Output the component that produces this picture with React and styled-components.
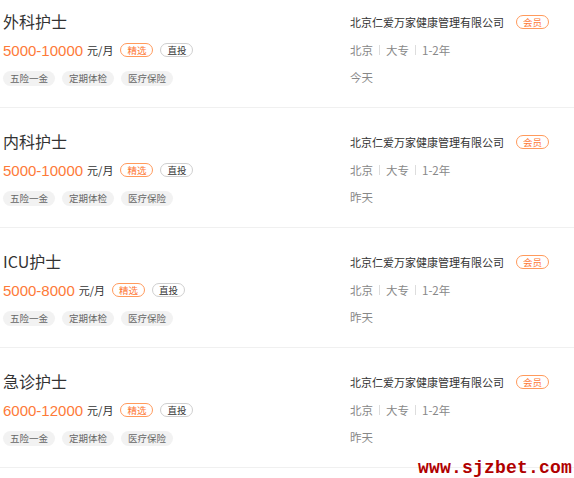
import React from "react";
import styled, { createGlobalStyle } from "styled-components";

const GlobalStyle = createGlobalStyle`
  body {
    margin: 0;
    background: #fff;
    font-family: "Noto Sans CJK SC", "Liberation Sans", sans-serif;
  }
`;

const Page = styled.div`
  position: relative;
  width: 574px;
  height: 478px;
  overflow: hidden;
`;

const Card = styled.div`
  display: flex;
  height: 107px;
  padding: 0 0 0 3px;
  border-bottom: 1px solid #f0f0f0;
  margin-bottom: 12px;
`;

const Left = styled.div`
  flex: 0 0 347px;
  padding-top: 10px;
`;

const Title = styled.div`
  font-size: 16px;
  line-height: 22px;
  height: 22px;
  color: #333;
`;

const SalaryRow = styled.div`
  display: flex;
  align-items: center;
  height: 16px;
  margin-top: 10px;
`;

const Salary = styled.span`
  font-family: "Liberation Sans", "Noto Sans CJK SC", sans-serif;
  font-size: 15px;
  color: #fe7a38;
`;

const Unit = styled.span`
  font-size: 11px;
  color: #333;
  margin-left: 4px;
`;

const Badge = styled.span`
  display: inline-flex;
  align-items: center;
  justify-content: center;
  box-sizing: border-box;
  height: 14px;
  width: 33px;
  border-radius: 7px;
  font-size: 9.5px;
  border: 1px solid ${(p) => (p.$hot ? "#ff9a5c" : "#cfcfcf")};
  color: ${(p) => (p.$hot ? "#fe7a38" : "#333")};
  margin-left: ${(p) => p.$ml || 7}px;
`;

const Tags = styled.div`
  display: flex;
  gap: 7px;
  margin-top: 13px;
`;

const Tag = styled.span`
  height: 15px;
  line-height: 15px;
  padding: 0 7px;
  border-radius: 8px;
  background: #f2f2f2;
  color: #666;
  font-size: 9.5px;
`;

const Right = styled.div`
  flex: 1;
  padding-top: 14px;
`;

const Company = styled.div`
  display: flex;
  align-items: center;
  height: 16px;
  font-size: 11px;
  color: #333;
`;

const Meta = styled.div`
  display: flex;
  align-items: center;
  height: 16px;
  margin-top: ${(p) => p.$mt}px;
  font-size: 11.5px;
  color: #888;
`;

const Sep = styled.span`
  display: inline-block;
  width: 1px;
  height: 10px;
  background: #ddd;
  margin: 0 6px;
`;

const Watermark = styled.div`
  position: absolute;
  right: 2px;
  bottom: 1px;
  font-family: "Liberation Mono", monospace;
  font-weight: bold;
  font-size: 18px;
  letter-spacing: 0.2px;
  color: #b00000;
  line-height: 18px;
`;

const jobs = [
  { title: "外科护士", salary: "5000-10000", date: "今天" },
  { title: "内科护士", salary: "5000-10000", date: "昨天" },
  { title: "ICU护士", salary: "5000-8000", date: "昨天" },
  { title: "急诊护士", salary: "6000-12000", date: "昨天" },
];

const App = () => {
  return (
    <Page>
      <GlobalStyle />
      {jobs.map((job, i) => (
        <Card key={i}>
          <Left>
            <Title>{job.title}</Title>
            <SalaryRow>
              <Salary>{job.salary}</Salary>
              <Unit>元/月</Unit>
              <Badge $hot>精选</Badge>
              <Badge>直投</Badge>
            </SalaryRow>
            <Tags>
              <Tag>五险一金</Tag>
              <Tag>定期体检</Tag>
              <Tag>医疗保险</Tag>
            </Tags>
          </Left>
          <Right>
            <Company>
              北京仁爱万家健康管理有限公司
              <Badge $hot $ml={12}>会员</Badge>
            </Company>
            <Meta $mt={12}>
              北京<Sep />大专<Sep />1-2年
            </Meta>
            <Meta $mt={11}>{job.date}</Meta>
          </Right>
        </Card>
      ))}
      <Watermark>www.sjzbet.com</Watermark>
    </Page>
  );
};

export default App;
